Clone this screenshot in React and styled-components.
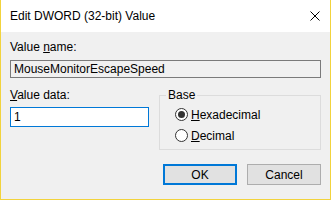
import React from "react";
import styled, { createGlobalStyle } from "styled-components";

const GlobalStyle = createGlobalStyle`
  html, body {
    margin: 0;
    padding: 0;
    background: #f0f0f0;
  }
  * {
    box-sizing: border-box;
  }
`;

const Window = styled.div`
  width: 331px;
  height: 200px;
  background: #f0f0f0;
  border: 1px solid #f2d33c;
  border-top: none;
  display: flex;
  flex-direction: column;
  font-family: "Liberation Sans", Arial, sans-serif;
  font-size: 12px;
  color: #000;
`;

const TitleBar = styled.div`
  height: 32px;
  background: #fff;
  display: flex;
  align-items: center;
  justify-content: space-between;
  padding: 0 9px 0 9px;
  h1 {
    margin: 0;
    font-size: 12px;
    font-weight: normal;
  }
`;

const CloseIcon = styled.svg`
  width: 10px;
  height: 10px;
  margin-right: 1px;
`;

const Body = styled.div`
  flex: 1;
  padding: 8px 9px 0 9px;
  display: flex;
  flex-direction: column;
`;

const Label = styled.div`
  line-height: 15px;
  height: 15px;
  u {
    text-decoration: underline;
  }
`;

const TextBox = styled.div`
  height: ${(p) => (p.$focused ? "20px" : "18px")};
  margin-top: ${(p) => p.$top || 0}px;
  border: 1px solid ${(p) => (p.$focused ? "#0078d7" : "#7a7a7a")};
  background: ${(p) => (p.$focused ? "#fff" : "#f0f0f0")};
  padding: 0 3px;
  line-height: ${(p) => (p.$focused ? "18px" : "16px")};
  white-space: nowrap;
`;

const Row = styled.div`
  display: grid;
  grid-template-columns: 139px 1fr;
  gap: 10px;
  margin-top: 10px;
`;

const Group = styled.fieldset`
  margin: 0;
  border: 1px solid #dcdcdc;
  padding: 1px 0 5px 15px;
  height: 62px;
  legend {
    margin-left: -9px;
    padding: 0 2px;
    line-height: 15px;
  }
`;

const RadioRow = styled.label`
  display: flex;
  align-items: center;
  gap: 3px;
  height: 21px;
`;

const RadioCircle = styled.span`
  width: 13px;
  height: 13px;
  border-radius: 50%;
  border: 1px solid #333;
  background: #fff;
  display: flex;
  align-items: center;
  justify-content: center;
  &::after {
    content: "";
    width: 7px;
    height: 7px;
    border-radius: 50%;
    background: ${(p) => (p.$checked ? "#333" : "transparent")};
  }
`;

const Buttons = styled.div`
  display: flex;
  justify-content: flex-end;
  gap: 10px;
  margin-top: 14px;
`;

const Button = styled.button`
  width: 74px;
  height: 21px;
  padding: 0;
  font-family: inherit;
  font-size: 12px;
  color: #000;
  background: #e1e1e1;
  border: ${(p) => (p.$primary ? "2px solid #0078d7" : "1px solid #adadad")};
`;

const Radio = ({ checked, letter, rest }) => (
  <RadioRow>
    <RadioCircle $checked={checked} />
    <span>
      <u>{letter}</u>
      {rest}
    </span>
  </RadioRow>
);

export default function App() {
  return (
    <>
      <GlobalStyle />
      <Window>
        <TitleBar>
          <h1>Edit DWORD (32-bit) Value</h1>
          <CloseIcon viewBox="0 0 10 10">
            <path d="M0.5 0.5 L9.5 9.5 M9.5 0.5 L0.5 9.5" stroke="#000" strokeWidth="1" />
          </CloseIcon>
        </TitleBar>
        <Body>
          <Label>
            Value <u>n</u>ame:
          </Label>
          <TextBox $top={5}>MouseMonitorEscapeSpeed</TextBox>
          <Row>
            <div>
              <Label>
                <u>V</u>alue data:
              </Label>
              <TextBox $focused $top={4}>
                1
              </TextBox>
            </div>
            <Group>
              <legend>Base</legend>
              <Radio checked letter="H" rest="exadecimal" />
              <Radio letter="D" rest="ecimal" />
            </Group>
          </Row>
          <Buttons>
            <Button $primary>OK</Button>
            <Button>Cancel</Button>
          </Buttons>
        </Body>
      </Window>
    </>
  );
}
